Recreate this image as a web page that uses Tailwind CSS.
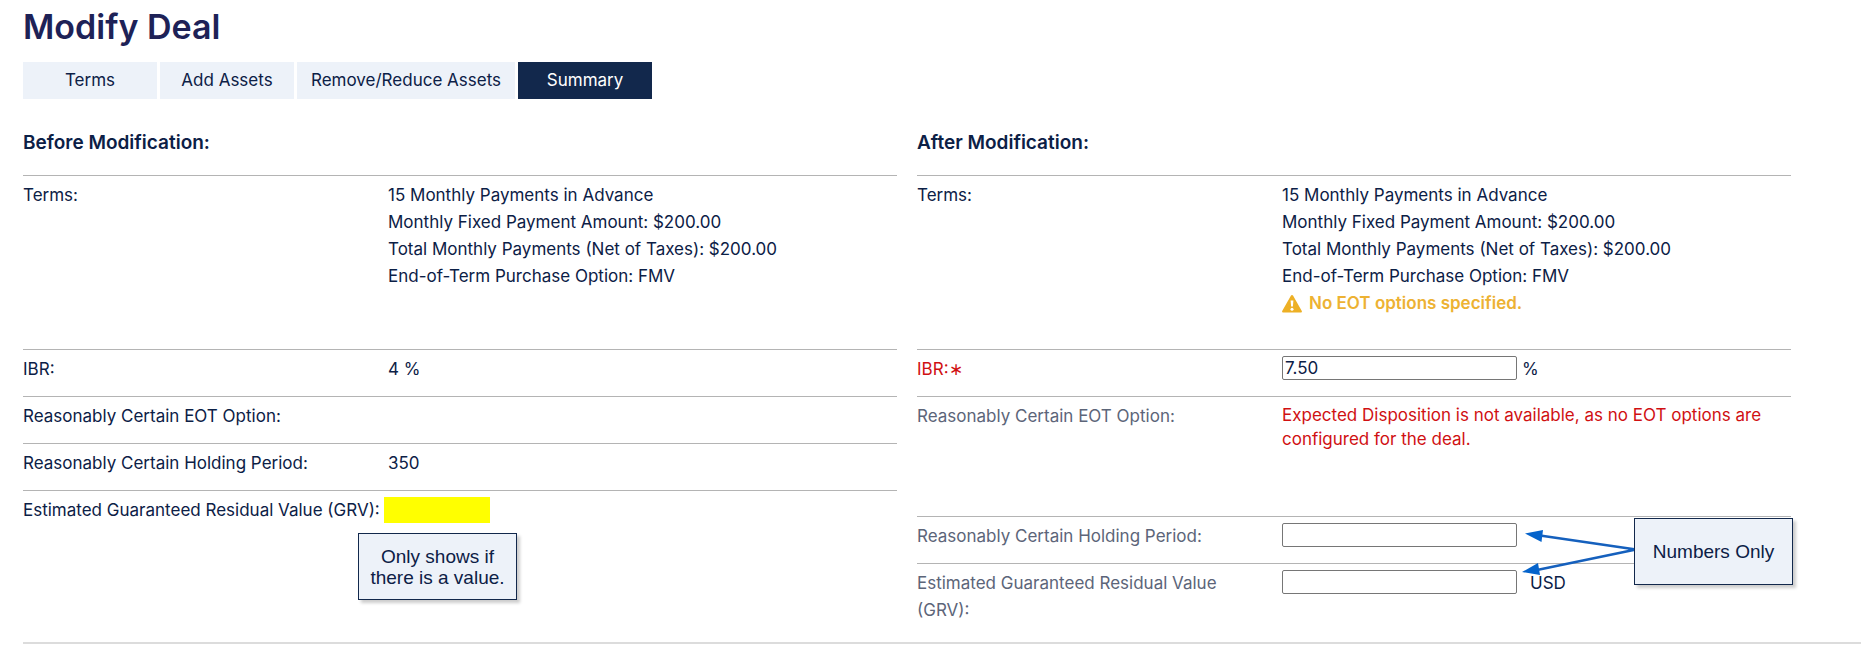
<!DOCTYPE html>
<html lang="en">
<head>
    <meta charset="UTF-8">
    <meta name="viewport" content="width=device-width, initial-scale=1.0">
    <title>Modify Deal</title>
    <script src="https://cdn.jsdelivr.net/npm/@tailwindcss/browser@4"></script>
</head>
<body class="bg-white font-['Inter',sans-serif] text-[17px] leading-[27px] text-[#0c2046]">

    <main class="pl-[23px] pt-2">
        <h1 class="text-[34px] leading-[38px] font-semibold text-[#1e2257]">Modify Deal</h1>

        <!-- Wizard steps -->
        <nav class="mt-4 flex gap-[3px]">
            <button type="button" class="h-[37px] min-w-[134px] bg-[#edf2f9] px-[14px]">Terms</button>
            <button type="button" class="h-[37px] min-w-[134px] bg-[#edf2f9] px-[14px]">Add Assets</button>
            <button type="button" class="h-[37px] min-w-[134px] bg-[#edf2f9] px-[14px]">Remove/Reduce Assets</button>
            <button type="button" class="h-[37px] min-w-[134px] bg-[#12284c] px-[14px] text-white" aria-current="step">Summary</button>
        </nav>

        <div class="mt-[30px] flex gap-5 border-b-2 border-[#dcdcdc] pr-[70px] pb-[18px]">

            <!-- Before -->
            <section class="flex-1">
                <h2 class="mb-[19px] text-[19px] font-semibold">Before Modification:</h2>
                <dl>
                    <div class="flex min-h-[174px] border-t border-[#b4b4b4] pt-[6px]">
                        <dt class="w-[365px] shrink-0">Terms:</dt>
                        <dd>
                            <p>15 Monthly Payments in Advance</p>
                            <p>Monthly Fixed Payment Amount: $200.00</p>
                            <p>Total Monthly Payments (Net of Taxes): $200.00</p>
                            <p>End-of-Term Purchase Option: FMV</p>
                        </dd>
                    </div>
                    <div class="flex min-h-[47px] border-t border-[#b4b4b4] pt-[6px]">
                        <dt class="w-[365px] shrink-0">IBR:</dt>
                        <dd>4 %</dd>
                    </div>
                    <div class="flex min-h-[47px] border-t border-[#b4b4b4] pt-[6px]">
                        <dt class="w-[365px] shrink-0">Reasonably Certain EOT Option:</dt>
                        <dd></dd>
                    </div>
                    <div class="flex min-h-[47px] border-t border-[#b4b4b4] pt-[6px]">
                        <dt class="w-[365px] shrink-0">Reasonably Certain Holding Period:</dt>
                        <dd>350</dd>
                    </div>
                    <div class="relative flex min-h-[47px] border-t border-[#b4b4b4] pt-[6px]">
                        <dt class="w-[361px] shrink-0">Estimated Guaranteed Residual Value (GRV):</dt>
                        <dd class="h-[26px] w-[106px] bg-[#ffff00]"></dd>
                        <!-- Callout -->
                        <div class="absolute top-[42px] left-[335px] flex h-[67px] w-[159px] items-center justify-center border border-[#12284c] bg-[#edf2f9] text-center font-['Liberation_Sans',sans-serif] text-[19px] leading-[21px] shadow-[3px_3px_3px_rgba(0,0,0,0.2)]">Only shows if<br>there is a value.</div>
                    </div>
                </dl>
            </section>

            <!-- After -->
            <section class="flex-1">
                <h2 class="mb-[19px] text-[19px] font-semibold">After Modification:</h2>
                <form>
                    <div class="flex min-h-[174px] border-t border-[#b4b4b4] pt-[6px]">
                        <div class="w-[365px] shrink-0">Terms:</div>
                        <div>
                            <p>15 Monthly Payments in Advance</p>
                            <p>Monthly Fixed Payment Amount: $200.00</p>
                            <p>Total Monthly Payments (Net of Taxes): $200.00</p>
                            <p>End-of-Term Purchase Option: FMV</p>
                            <p class="flex items-center gap-[7px] font-semibold text-[#edb233]">
                                <svg class="h-5 w-5" viewBox="0 0 20 20" aria-hidden="true">
                                    <path fill="#edb025" d="M9 1.600a1.150 1.150 0 0 1 2 0l8.800 15.400a1.100 1.100 0 0 1-1 1.600H1.200a1.100 1.100 0 0 1-1-1.600z"/>
                                    <path fill="#fff" d="M8.600 6.400h2.800l-.5 6.200H9.100z"/>
                                    <circle cx="10" cy="15.200" r="1.500" fill="#fff"/>
                                </svg>
                                No EOT options specified.
                            </p>
                        </div>
                    </div>
                    <div class="flex min-h-[47px] border-t border-[#b4b4b4] pt-[6px]">
                        <label for="ibr" class="w-[365px] shrink-0 text-[#d01012]">IBR:∗</label>
                        <div class="flex gap-[5px]">
                            <input id="ibr" type="text" value="7.50" class="h-6 w-[235px] rounded-[2px] border border-[#767676] px-[2px]">
                            <span>%</span>
                        </div>
                    </div>
                    <div class="flex min-h-[120px] border-t border-[#b4b4b4] pt-[6px]">
                        <div class="w-[365px] shrink-0 text-[#5c6579]">Reasonably Certain EOT Option:</div>
                        <p class="leading-6 text-[#d01012]">Expected Disposition is not available, as no EOT options are configured for the deal.</p>
                    </div>
                    <div class="relative flex min-h-[47px] border-t border-[#b4b4b4] pt-[6px]">
                        <label for="holding" class="w-[365px] shrink-0 text-[#5c6579]">Reasonably Certain Holding Period:</label>
                        <input id="holding" type="text" class="h-6 w-[235px] rounded-[2px] border border-[#767676] px-[2px]">
                        <!-- Callout with arrows to both number fields -->
                        <svg class="absolute top-[9px] right-[154px] z-10 h-[52px] w-[117px]" viewBox="0 0 117 52" aria-hidden="true">
                            <path fill="none" stroke="#1560bd" stroke-width="2.5" d="M20 9.500 116 23.500 17 44"/>
                            <path fill="#0563cb" d="M5 7.500 23 4l-1.500 12zM2 46l16-9 2 12z"/>
                        </svg>
                        <div class="absolute top-px right-[-2px] z-10 flex h-[67px] w-[159px] items-center justify-center border border-[#12284c] bg-[#edf2f9] font-['Liberation_Sans',sans-serif] text-[19px] leading-[21px] shadow-[3px_3px_3px_rgba(0,0,0,0.2)]">Numbers Only</div>
                    </div>
                    <div class="flex min-h-[60px] border-t border-[#b4b4b4] pt-[6px]">
                        <label for="grv" class="w-[365px] shrink-0 pr-10 text-[#5c6579]">Estimated Guaranteed Residual Value (GRV):</label>
                        <div class="flex gap-[13px]">
                            <input id="grv" type="text" class="h-6 w-[235px] rounded-[2px] border border-[#767676] px-[2px]">
                            <span>USD</span>
                        </div>
                    </div>
                </form>
            </section>

        </div>
    </main>

</body>
</html>
